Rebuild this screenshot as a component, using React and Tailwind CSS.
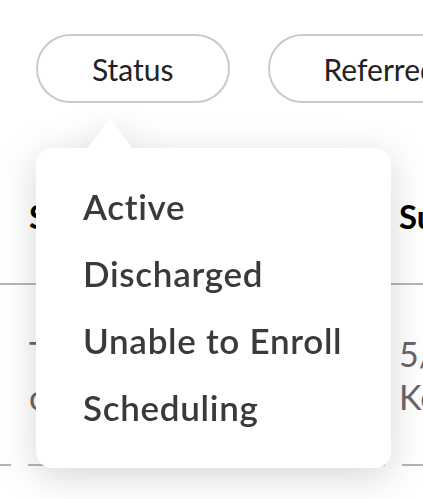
import React from 'react'

const statuses = ['Active', 'Discharged', 'Unable to Enroll', 'Scheduling']

const App = () => {
  return (
    <div className="relative w-[423px] h-[499px] overflow-hidden bg-white font-['Lato','Open_Sans',sans-serif]">
      {/* Filter pills */}
      <div className="flex gap-[38px] pl-[36px] pt-[34px] whitespace-nowrap">
        <button className="h-[69px] px-[54px] rounded-full border-2 border-[#cdc8cd] text-[30px] text-[#222] leading-none flex items-center shrink-0">
          Status
        </button>
        <button className="h-[69px] px-[54px] rounded-full border-2 border-[#cdc8cd] text-[30px] text-[#222] leading-none flex items-center shrink-0">
          Referred By
        </button>
      </div>

      {/* Table behind the menu */}
      <div className="h-[182px] pt-[93px] border-b-2 border-[#bab4ba] grid grid-cols-[370px_1fr] pl-[29px] text-[33px] leading-[40px] font-bold text-black whitespace-nowrap overflow-hidden">
        <div>Status</div>
        <div>Submitted</div>
      </div>
      <div className="h-[179px] pt-[47px] grid grid-cols-[370px_1fr] pl-[29px] text-[34px] leading-[43px] text-[#6b656a] whitespace-nowrap overflow-hidden">
        <div>
          <div>Tina Moore</div>
          <div>cardiology</div>
        </div>
        <div>
          <div>5/12/2023</div>
          <div>Kelly Ross</div>
        </div>
      </div>
      <div className="h-[2px] bg-[repeating-linear-gradient(90deg,#bab4ba_0_17px,transparent_17px_34px)] bg-[position:-6px_0]"></div>

      {/* Status dropdown */}
      <div className="absolute left-[36px] top-[119px] drop-shadow-[0_8px_18px_rgba(0,0,0,0.16)]">
        <svg className="absolute left-[51px] top-0" width="46" height="30" viewBox="0 0 46 30">
          <path d="M0 30 L21 1.5 Q23 -0.5 25 1.5 L46 30 Z" fill="#fff" />
        </svg>
        <div className="mt-[29px] w-[355px] h-[320px] rounded-[16px] bg-white pt-[25px] pl-[47px]">
          {statuses.map((s) => (
            <div key={s} className="text-[35px] leading-[67px] tracking-[0.7px] font-semibold text-[#3a3a3a] whitespace-nowrap">
              {s}
            </div>
          ))}
        </div>
      </div>
    </div>
  )
}

export default App
